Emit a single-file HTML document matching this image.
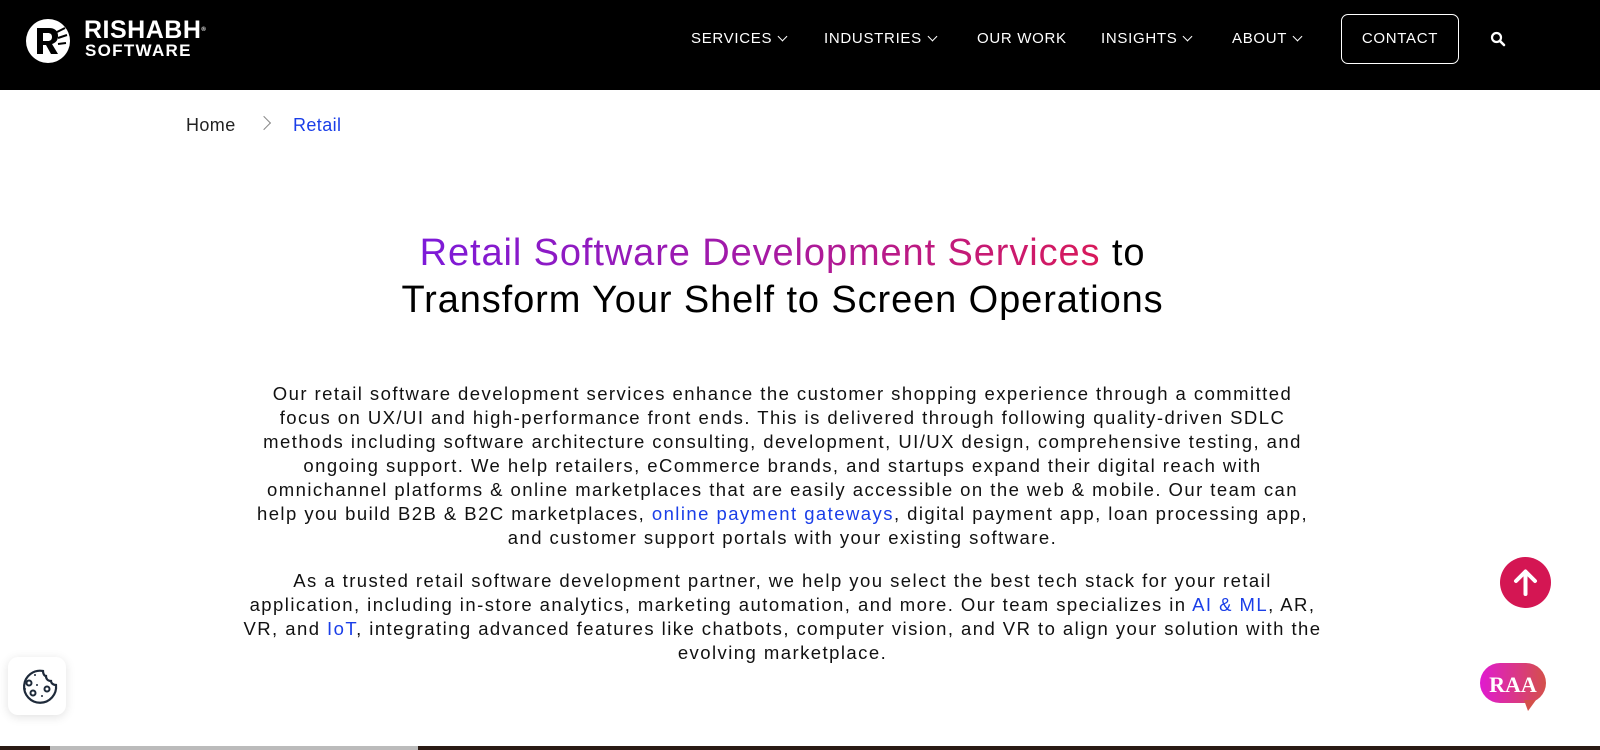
<!DOCTYPE html>
<html><head><meta charset="utf-8"><style>
*{margin:0;padding:0;box-sizing:border-box}
body{width:1600px;height:750px;overflow:hidden;background:#fff;font-family:"Liberation Sans",Arial,sans-serif;position:relative;color:#1a1a1a}
.hdr{position:absolute;left:0;top:0;width:1600px;height:90px;background:#000}
.nav{position:absolute;top:30px;color:#fff;font-size:15px;letter-spacing:0.7px;font-weight:500}
.nav span.c{display:inline-block;width:7px;height:7px;border-right:1.5px solid #fff;border-bottom:1.5px solid #fff;transform:rotate(45deg);margin-left:7px;position:relative;top:-3px}
.contact{position:absolute;left:1341px;top:14px;width:118px;height:50px;border:1px solid #fff;border-radius:7px;color:#fff;font-size:15px;letter-spacing:0.7px;text-align:center;line-height:48px}
.bc{position:absolute;top:115px;font-size:18px;letter-spacing:0.4px}
h1{position:absolute;left:0;top:230px;width:1565px;text-align:center;font-size:38px;font-weight:400;line-height:47px;color:#000;letter-spacing:0.9px;white-space:nowrap}
.g{background:linear-gradient(90deg,#7d1ad9,#a51aa5 50%,#d81a5a);-webkit-background-clip:text;background-clip:text;color:transparent}
p{position:absolute;left:0;width:1565px;text-align:center;font-size:18.5px;line-height:24px;color:#111;letter-spacing:1.45px;white-space:nowrap}
a{color:#1a3ee8;text-decoration:none}
</style></head><body>
<div class="hdr">
<svg style="position:absolute;left:25px;top:18px" width="50" height="46" viewBox="0 0 50 46"><circle cx="23" cy="23" r="22" fill="#fff"/><path d="M12 10h12c6 0 9 3 9 8s-3 7-6 8l6 10h-7l-5-9h-3v9h-6z M18 15v8h5c2 0 4-1 4-4s-2-4-4-4z" fill="#000" fill-rule="evenodd"/><path d="M32 14l8-4M33 20l9-3M33 26l8-1" stroke="#000" stroke-width="2"/></svg>
<div style="position:absolute;left:84px;top:18px;color:#fff;font-size:25px;font-weight:700;letter-spacing:0.5px;line-height:24px">RISHABH<sup style="font-size:6px;vertical-align:top">®</sup></div>
<div style="position:absolute;left:85px;top:42px;color:#fff;font-size:17px;font-weight:700;letter-spacing:1.3px;line-height:17px">SOFTWARE</div>
<div class="nav" style="left:691px">SERVICES<span class="c"></span></div>
<div class="nav" style="left:824px">INDUSTRIES<span class="c"></span></div>
<div class="nav" style="left:977px">OUR WORK</div>
<div class="nav" style="left:1101px">INSIGHTS<span class="c"></span></div>
<div class="nav" style="left:1232px">ABOUT<span class="c"></span></div>
<div class="contact">CONTACT</div>
<svg style="position:absolute;left:1490px;top:31px" width="16" height="16" viewBox="0 0 16 16"><circle cx="6.5" cy="6.5" r="4.5" stroke="#fff" stroke-width="2.2" fill="none"/><path d="M10 10l4 4" stroke="#fff" stroke-width="2.6" stroke-linecap="round"/></svg>
</div>
<div class="bc" style="left:186px;color:#222">Home</div>
<div style="position:absolute;left:259px;top:118px;width:10px;height:10px;border-right:1.3px solid #888;border-top:1.3px solid #888;transform:rotate(45deg)"></div>
<div class="bc" style="left:293px;color:#1a3ee8">Retail</div>
<h1><span class="g">Retail Software Development Services</span> to<br>Transform Your Shelf to Screen Operations</h1>
<p style="top:382px">Our retail software development services enhance the customer shopping experience through a committed<br>focus on UX/UI and high-performance front ends. This is delivered through following quality-driven SDLC<br>methods including software architecture consulting, development, UI/UX design, comprehensive testing, and<br>ongoing support. We help retailers, eCommerce brands, and startups expand their digital reach with<br>omnichannel platforms &amp; online marketplaces that are easily accessible on the web &amp; mobile. Our team can<br>help you build B2B &amp; B2C marketplaces, <a>online payment gateways</a>, digital payment app, loan processing app,<br>and customer support portals with your existing software.</p>
<p style="top:569px">As a trusted retail software development partner, we help you select the best tech stack for your retail<br>application, including in-store analytics, marketing automation, and more. Our team specializes in <a>AI &amp; ML</a>, AR,<br>VR, and <a>IoT</a>, integrating advanced features like chatbots, computer vision, and VR to align your solution with the<br>evolving marketplace.</p>
<div style="position:absolute;left:1500px;top:557px;width:51px;height:51px;border-radius:50%;background:#d41653"></div>
<svg style="position:absolute;left:1500px;top:557px" width="51" height="51" viewBox="0 0 51 51"><path d="M25.5 37V15M16 24l9.5-9.5L35 24" stroke="#fff" stroke-width="4" fill="none" stroke-linecap="round" stroke-linejoin="round"/></svg>
<svg style="position:absolute;left:1480px;top:662px" width="66" height="50" viewBox="0 0 66 50"><defs><linearGradient id="rg"><stop offset="0" stop-color="#e01ad0"/><stop offset="1" stop-color="#d4504a"/></linearGradient></defs><rect x="0" y="1" width="66" height="40" rx="20" fill="url(#rg)"/><path d="M44 38l4 11 8-11z" fill="#d4504a"/><text x="33" y="30" text-anchor="middle" font-family="Liberation Serif,serif" font-weight="700" font-size="22" fill="#fff">RAA</text></svg>
<div style="position:absolute;left:8px;top:657px;width:58px;height:58px;border-radius:10px;background:#fff;box-shadow:0 2px 10px rgba(0,0,0,.12)"></div>
<svg style="position:absolute;left:16px;top:664px" width="44" height="44" viewBox="0 0 44 44"><path d="M27 7a16 16 0 1 0 13 14c-3 0-5-2-5-4-3 0-5-2-5-5-2 0-3-3-3-5z" stroke="#1e2a3a" stroke-width="2.2" fill="none"/><circle cx="13" cy="19" r="2.5" stroke="#1e2a3a" stroke-width="2" fill="none"/><circle cx="17" cy="29" r="2.5" stroke="#1e2a3a" stroke-width="2" fill="none"/><circle cx="31" cy="25" r="2.5" stroke="#1e2a3a" stroke-width="2" fill="none"/><circle cx="19" cy="11" r="1" fill="#1e2a3a"/><circle cx="21" cy="21" r="1" fill="#1e2a3a"/><circle cx="9" cy="25" r="1" fill="#1e2a3a"/><circle cx="26" cy="32" r="1" fill="#1e2a3a"/></svg>
<div style="position:absolute;left:0;top:746px;width:1600px;height:4px;background:#2a1a14"></div>
<div style="position:absolute;left:50px;top:746px;width:368px;height:4px;background:#bbb"></div>
</body></html>
